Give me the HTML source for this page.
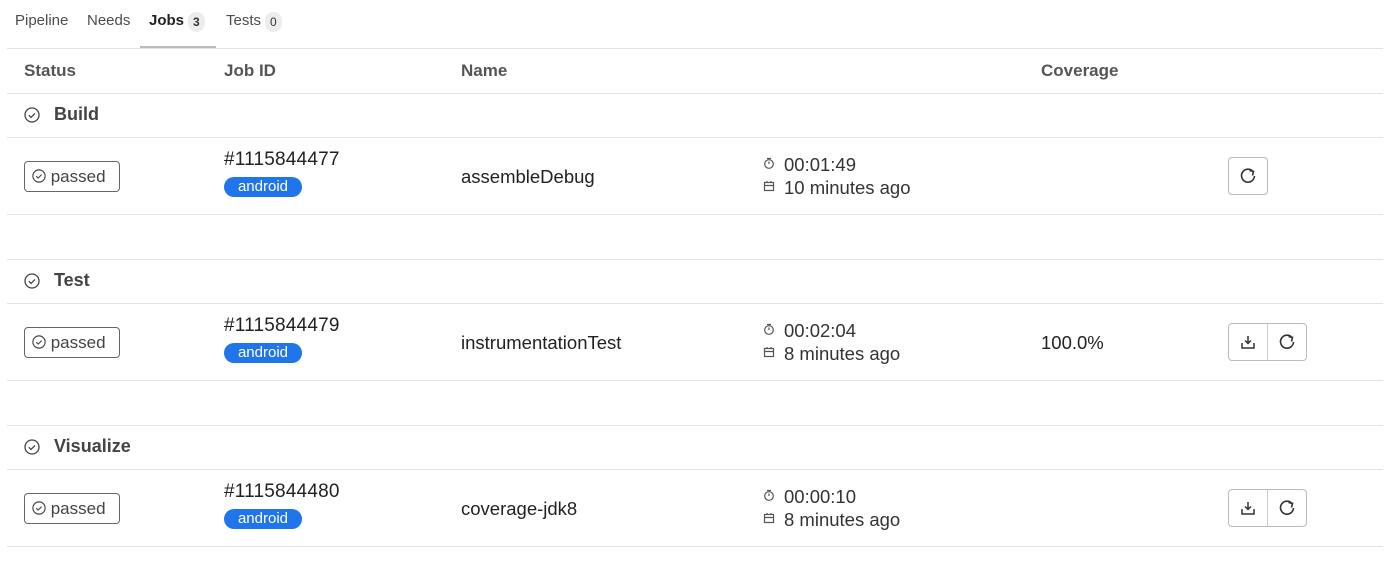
<!DOCTYPE html>
<html><head><style>
body{margin:0;width:1400px;height:571px;background:#fff;font-family:"Liberation Sans",sans-serif;color:#333;position:relative;overflow:hidden}
.a{position:absolute;white-space:nowrap}
.ln{position:absolute;left:7px;width:1376px;height:1px;background:#e3e3e3}
.tab{font-size:15px;color:#4c4c4c;top:12px;line-height:18px}
.cnt{display:inline-block;background:#ececec;border-radius:10px;font-size:12px;padding:0 5px;margin-left:4px;color:#333;line-height:20px;height:20px;vertical-align:-1px}
.h{font-size:17px;font-weight:bold;color:#555}
.st{font-size:18px;font-weight:bold;color:#444}
.pass{left:24px;width:96px;height:31px;border:1px solid #666;border-radius:4px;box-sizing:border-box;font-size:17px;color:#444;line-height:29px;padding-left:7px}
.id{font-size:19px;color:#222;letter-spacing:0.2px}
.tag{background:#1f75e9;color:#fff;font-size:15px;border-radius:10px;padding:0;width:78px;text-align:center;height:20px;line-height:20px}
.nm{font-size:18.5px;color:#222}
.tm{font-size:18.5px;color:#333}
.btn{border:1px solid #bbb;border-radius:4px;height:38px;box-sizing:border-box;display:flex}
.btn div{width:38px;height:36px;display:flex;align-items:center;justify-content:center}
</style></head><body>
<div class="a tab" style="left:15px">Pipeline</div>
<div class="a tab" style="left:87px">Needs</div>
<div class="a tab" style="left:149px;font-weight:bold;color:#222">Jobs<span class="cnt">3</span></div>
<div class="a tab" style="left:226px">Tests<span class="cnt">0</span></div>
<div class="a" style="left:140px;top:46px;width:76px;height:2px;background:#bbb"></div>
<div class="ln" style="top:48px"></div>
<div class="a h" style="left:24px;top:61px">Status</div>
<div class="a h" style="left:224px;top:61px">Job ID</div>
<div class="a h" style="left:461px;top:61px">Name</div>
<div class="a h" style="left:1041px;top:61px">Coverage</div>
<div class="ln" style="top:93px"></div>

<svg width="0" height="0" style="position:absolute"><defs>
<g id="ck"><circle cx="8" cy="8" r="7" fill="none" stroke="#444" stroke-width="1.3"/><path d="M4.8 8.2l2.2 2.2 4-4" fill="none" stroke="#444" stroke-width="1.3"/></g>
<g id="clk"><circle cx="6" cy="7" r="4.3" fill="none" stroke="#555" stroke-width="1.2"/><path d="M4 1.5h4M6 4.5v2.5" stroke="#555" stroke-width="1.2"/></g>
<g id="cal"><rect x="1.5" y="2.5" width="9" height="8" fill="none" stroke="#555" stroke-width="1.2"/><path d="M1.5 5.5h9M4 1v2M8 1v2" stroke="#555" stroke-width="1.2"/></g>
<g id="rt"><path d="M14 4.5A6.5 6.5 0 1 0 15.5 9" fill="none" stroke="#333" stroke-width="1.6"/><path d="M10.5 3.5l4 1-1 4" fill="none" stroke="#333" stroke-width="1.6"/></g>
<g id="dl"><path d="M8 2v7M5 6.5l3 3 3-3M2 9v5h12V9" fill="none" stroke="#333" stroke-width="1.5"/></g>
</defs></svg>

<!-- Build -->
<svg class="a" style="left:24px;top:107px" width="16" height="16"><use href="#ck"/></svg>
<div class="a st" style="left:54px;top:104px">Build</div>
<div class="ln" style="top:137px"></div>
<div class="a pass" style="top:161px"><svg width="14" height="14" viewBox="0 0 16 16" style="vertical-align:-1px"><use href="#ck"/></svg> passed</div>
<div class="a id" style="left:224px;top:149px">#1115844477</div>
<div class="a tag" style="left:224px;top:177px">android</div>
<div class="a nm" style="left:461px;top:166px">assembleDebug</div>
<svg class="a" style="left:763px;top:157px" width="12" height="12"><use href="#clk"/></svg>
<div class="a tm" style="left:784px;top:154px">00:01:49</div>
<svg class="a" style="left:763px;top:180px" width="12" height="12"><use href="#cal"/></svg>
<div class="a tm" style="left:784px;top:177px">10 minutes ago</div>
<div class="a btn" style="left:1228px;top:157px"><div><svg width="18" height="18"><use href="#rt"/></svg></div></div>
<div class="ln" style="top:214px"></div>
<div class="ln" style="top:259px"></div>

<!-- Test -->
<svg class="a" style="left:24px;top:273px" width="16" height="16"><use href="#ck"/></svg>
<div class="a st" style="left:54px;top:270px">Test</div>
<div class="ln" style="top:303px"></div>
<div class="a pass" style="top:327px"><svg width="14" height="14" viewBox="0 0 16 16" style="vertical-align:-1px"><use href="#ck"/></svg> passed</div>
<div class="a id" style="left:224px;top:315px">#1115844479</div>
<div class="a tag" style="left:224px;top:343px">android</div>
<div class="a nm" style="left:461px;top:332px">instrumentationTest</div>
<svg class="a" style="left:763px;top:323px" width="12" height="12"><use href="#clk"/></svg>
<div class="a tm" style="left:784px;top:320px">00:02:04</div>
<svg class="a" style="left:763px;top:346px" width="12" height="12"><use href="#cal"/></svg>
<div class="a tm" style="left:784px;top:343px">8 minutes ago</div>
<div class="a nm" style="left:1041px;top:332px">100.0%</div>
<div class="a btn" style="left:1228px;top:323px"><div style="border-right:1px solid #ccc"><svg width="16" height="16"><use href="#dl"/></svg></div><div><svg width="18" height="18"><use href="#rt"/></svg></div></div>
<div class="ln" style="top:380px"></div>
<div class="ln" style="top:425px"></div>

<!-- Visualize -->
<svg class="a" style="left:24px;top:439px" width="16" height="16"><use href="#ck"/></svg>
<div class="a st" style="left:54px;top:436px">Visualize</div>
<div class="ln" style="top:469px"></div>
<div class="a pass" style="top:493px"><svg width="14" height="14" viewBox="0 0 16 16" style="vertical-align:-1px"><use href="#ck"/></svg> passed</div>
<div class="a id" style="left:224px;top:481px">#1115844480</div>
<div class="a tag" style="left:224px;top:509px">android</div>
<div class="a nm" style="left:461px;top:498px">coverage-jdk8</div>
<svg class="a" style="left:763px;top:489px" width="12" height="12"><use href="#clk"/></svg>
<div class="a tm" style="left:784px;top:486px">00:00:10</div>
<svg class="a" style="left:763px;top:512px" width="12" height="12"><use href="#cal"/></svg>
<div class="a tm" style="left:784px;top:509px">8 minutes ago</div>
<div class="a btn" style="left:1228px;top:489px"><div style="border-right:1px solid #ccc"><svg width="16" height="16"><use href="#dl"/></svg></div><div><svg width="18" height="18"><use href="#rt"/></svg></div></div>
<div class="ln" style="top:546px"></div>
</body></html>
